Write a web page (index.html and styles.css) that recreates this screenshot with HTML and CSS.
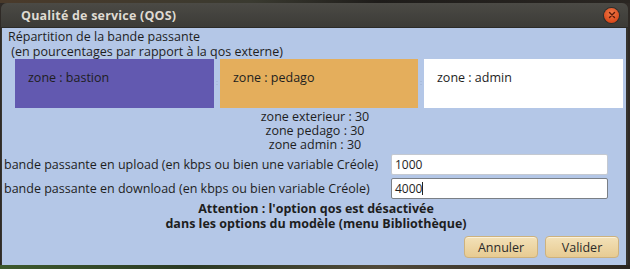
FILE: index.html
```html
<!DOCTYPE html>
<html lang="fr">
<head>
<meta charset="utf-8">
<title>Qualité de service (QOS)</title>
<link rel="stylesheet" href="styles.css">
</head>
<body>
<div class="desk-top"></div>
<div class="window">
  <div class="titlebar">
    <span class="title">Qualité de service (QOS)</span>
    <span class="close"><svg width="8" height="8" viewBox="0 0 8 8"><path d="M1.5 1.5 L6.5 6.5 M6.5 1.5 L1.5 6.5" stroke="#5a1a08" stroke-width="1.4" stroke-linecap="round"/></svg></span>
  </div>
  <div class="content">
    <div class="intro">
      <div>Répartition de la bande passante</div>
      <div>&nbsp;(en pourcentages par rapport à la qos externe)</div>
    </div>
    <div class="zones">
      <div class="zone zone-bastion">zone : bastion</div>
      <div class="handle"></div>
      <div class="zone zone-pedago">zone : pedago</div>
      <div class="handle"></div>
      <div class="zone zone-admin">zone : admin</div>
    </div>
    <div class="summary">
      <div>zone exterieur : 30</div>
      <div>zone pedago : 30</div>
      <div>zone admin : 30</div>
    </div>
    <div class="fields">
      <label class="field-label">bande passante en upload (en kbps ou bien une variable Créole)</label>
      <div class="input">1000</div>
      <label class="field-label">bande passante en download (en kbps ou bien variable Créole)</label>
      <div class="input input-focus">4000<span class="caret"></span></div>
    </div>
    <div class="warning">
      <div>Attention : l'option qos est désactivée</div>
      <div>dans les options du modèle (menu Bibliothèque)</div>
    </div>
    <div class="buttons">
      <button class="btn">Annuler</button>
      <button class="btn">Valider</button>
    </div>
  </div>
</div>
<div class="desk-bottom"></div>
</body>
</html>
```
FILE: styles.css
```css
html, body {
  margin: 0;
  padding: 0;
}
body {
  width: 630px;
  height: 269px;
  overflow: hidden;
  background: #2f2a26;
  font-family: "Open Sans", "Noto Sans", sans-serif;
  font-size: 12.5px;
  color: #1e1e1e;
}
.desk-top {
  height: 3px;
  background: linear-gradient(90deg, #4a3a2a 0%, #3a3a30 40%, #1e1c1a 60%, #2a2622 100%);
}
.window {
  margin-left: 1px;
  width: 627px;
  background: #36342f;
  border-radius: 6px 6px 0 0;
}
.titlebar {
  height: 24px;
  display: flex;
  align-items: center;
  justify-content: space-between;
  padding: 0 9px 0 20px;
  background: linear-gradient(#4b4a45, #3c3b37);
  border-radius: 6px 6px 0 0;
  border-bottom: 1px solid #2c2b28;
}
.title {
  font-weight: bold;
  font-size: 12.5px;
  color: #dfdbd2;
  letter-spacing: 0.2px;
}
.close {
  width: 15px;
  height: 15px;
  border-radius: 50%;
  background: radial-gradient(circle at 50% 35%, #f07a4a, #dc4b1c 70%, #c03c12);
  display: flex;
  align-items: center;
  justify-content: center;
  box-shadow: 0 0 0 1px #2f2e2a;
}
.content {
  margin: 0 2px 0 1px;
  background: #b4c7e7;
  height: 237px;
  padding: 1px 0 0 0;
  box-sizing: border-box;
}
.intro {
  padding-left: 6px;
  line-height: 15px;
}
.zones {
  display: flex;
  align-items: stretch;
  margin: 0 2px 0 13px;
  height: 49px;
}
.zone {
  width: 199px;
  padding: 11px 0 0 13px;
  box-sizing: border-box;
  line-height: 15px;
}
.zone-bastion { background: #6259b0; }
.zone-pedago { background: #e4ae5c; width: 198px; }
.zone-admin { background: #ffffff; }
.handle {
  width: 6px;
  background: linear-gradient(#a9bcdc, #a9bcdc) center 22px / 2px 1px no-repeat,
              linear-gradient(#a9bcdc, #a9bcdc) center 25px / 2px 1px no-repeat;
}
.summary {
  text-align: center;
  line-height: 14px;
  padding-top: 2px;
  margin-left: 2px;
}
.fields {
  display: grid;
  grid-template-columns: 389px 217px;
  row-gap: 3px;
  margin-top: 2px;
  align-items: center;
}
.field-label {
  padding-left: 2px;
}
.input {
  height: 21px;
  box-sizing: border-box;
  background: #ffffff;
  border: 1px solid #c4c9d1;
  border-radius: 2px;
  padding: 0 3px;
  line-height: 19px;
  font-size: 12px;
}
.input-focus {
  border-color: #7a7f86;
}
.caret {
  display: inline-block;
  width: 1px;
  height: 13px;
  background: #222;
  vertical-align: -2px;
}
.warning {
  text-align: center;
  font-weight: bold;
  line-height: 15px;
  margin-top: 2px;
  margin-left: 4px;
}
.buttons {
  display: flex;
  justify-content: flex-end;
  gap: 7px;
  padding: 5px 7px 0 0;
}
.btn {
  width: 74px;
  height: 22px;
  font-family: inherit;
  font-size: 12.5px;
  color: #2a2a2a;
  background: linear-gradient(#f3e1b8, #e7cb92);
  border: 1px solid #cdb27e;
  border-radius: 4px;
  padding: 0;
  box-shadow: inset 0 1px 0 #fbf1da;
}
.desk-bottom {
  height: 5px;
  background: linear-gradient(90deg, #3e5a2e 0%, #2b3a24 30%, #514a3a 60%, #2a2520 100%);
}
```
